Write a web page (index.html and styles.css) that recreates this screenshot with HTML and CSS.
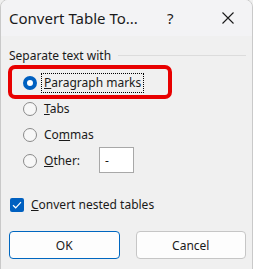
FILE: index.html
```html
<!DOCTYPE html>
<html>
<head>
<meta charset="utf-8">
<link rel="stylesheet" href="styles.css">
</head>
<body>
<div class="window">
  <div class="titlebar">
    <span class="title">Convert Table To...</span>
    <span class="help">?</span>
    <span class="close"><svg width="12" height="12" viewBox="0 0 12 12"><path d="M0.5 0.5 L11.5 11.5 M11.5 0.5 L0.5 11.5" stroke="#1a1a1a" stroke-width="1.1" fill="none"/></svg></span>
  </div>
  <div class="content">
    <div class="legend"><span>Separate text with</span><span class="rule"></span></div>
    <div class="options">
      <div class="opt marked">
        <span class="radio checked"></span>
        <span class="label focus"><u>P</u>aragraph marks</span>
      </div>
      <div class="opt">
        <span class="radio"></span>
        <span class="label"><u>T</u>abs</span>
      </div>
      <div class="opt">
        <span class="radio"></span>
        <span class="label">Co<u>m</u>mas</span>
      </div>
      <div class="opt">
        <span class="radio"></span>
        <span class="label other"><u>O</u>ther:</span>
        <span class="field">-</span>
      </div>
    </div>
    <div class="check-row">
      <span class="checkbox"><svg width="10" height="8" viewBox="0 0 10 8"><path d="M1 4.2 L3.7 6.8 L9 1.2" stroke="#fff" stroke-width="1.2" fill="none"/></svg></span>
      <span class="label"><u>C</u>onvert nested tables</span>
    </div>
    <div class="buttons">
      <span class="btn primary">OK</span>
      <span class="btn">Cancel</span>
    </div>
  </div>
</div>
</body>
</html>
```

FILE: styles.css
```css
html, body {
  margin: 0;
  padding: 0;
  background: #f0f0f0;
}
body {
  width: 253px;
  height: 269px;
  overflow: hidden;
  font-family: "Noto Sans", "Open Sans", sans-serif;
  color: #1a1a1a;
}
.window {
  width: 251px;
  height: 280px;
  border: 1px solid #c9c9c9;
  border-radius: 8px 8px 0 0;
  background: #f0f0f0;
  overflow: hidden;
  margin-top: -1px;
}
.titlebar {
  height: 36px;
  background: #f3f3f5;
  display: flex;
  align-items: center;
}
.title {
  font-size: 15px;
  margin-left: 8px;
  width: 158px;
}
.help {
  font-size: 15px;
  width: 55px;
}
.close {
  display: flex;
}
.content {
  padding: 11px 6px 0 8px;
  font-size: 12px;
}
.legend {
  display: flex;
  align-items: center;
  height: 16px;
}
.rule {
  flex: 1;
  height: 1px;
  background: #dcdcdc;
  margin-left: 7px;
  margin-top: 1px;
}
.options {
  margin-top: 7px;
  display: flex;
  flex-direction: column;
}
.opt {
  height: 26px;
  display: flex;
  align-items: center;
  position: relative;
}
.opt.marked::before {
  content: "";
  position: absolute;
  left: -1px;
  top: -5px;
  width: 164px;
  height: 34px;
  box-sizing: border-box;
  border: 4px solid #e80000;
  border-radius: 7px;
}
.radio {
  width: 14px;
  height: 14px;
  box-sizing: border-box;
  border: 1px solid #8a8a8a;
  border-radius: 50%;
  margin-left: 14px;
  background: #f7f7f7;
}
.radio.checked {
  border: 4px solid #0060c0;
  background: #fff;
}
.label {
  margin-left: 7px;
  line-height: 16px;
}
.focus {
  outline: 1px dotted #000;
  outline-offset: 1px;
  margin-left: 6px;
  padding: 0 1px;
}
.other {
  width: 55px;
}
.field {
  width: 35px;
  height: 26px;
  box-sizing: border-box;
  border: 1px solid #a8a8a8;
  background: #fff;
  padding: 4px 0 0 5px;
  margin-top: -3px;
}
.check-row {
  display: flex;
  align-items: center;
  margin-top: 23px;
  height: 16px;
}
.checkbox {
  width: 14px;
  height: 14px;
  border-radius: 2px;
  background: #0060c0;
  display: flex;
  align-items: center;
  justify-content: center;
  margin-left: 1px;
}
.buttons {
  display: flex;
  gap: 16px;
  margin-top: 18px;
}
.btn {
  width: 111px;
  height: 28px;
  box-sizing: border-box;
  border: 1px solid #c6c6c6;
  border-radius: 4px;
  background: #fdfdfd;
  display: flex;
  align-items: center;
  justify-content: center;
}
.btn.primary {
  border-color: #0067c0;
}
```
